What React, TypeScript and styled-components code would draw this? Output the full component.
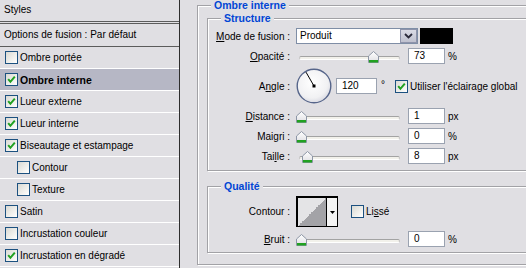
import React from 'react';
import styled, { createGlobalStyle } from 'styled-components';

const GlobalStyle = createGlobalStyle`
  html, body {
    margin: 0;
    padding: 0;
    overflow: hidden;
    background: #e0dfe3;
  }
  body {
    font-family: 'Liberation Sans', Arial, sans-serif;
    font-size: 10px;
    color: #000;
  }
`;

const Dialog = styled.div`
  display: flex;
  width: 526px;
  height: 268px;
  overflow: hidden;
  background: #e0dfe3;
`;

/* ---------- left list ---------- */

const StylesPanel = styled.div`
  width: 179px;
  flex: none;
  border-right: 1px solid #2e2e2e;
  display: flex;
  flex-direction: column;
`;

const PanelTitle = styled.div`
  height: 21px;
  line-height: 19px;
  padding-left: 4px;
`;

const DoubleRule = styled.div`
  height: 1px;
  border-top: 1px solid #5c5c5c;
  border-bottom: 1px solid #5c5c5c;
`;

const BlendRow = styled.div`
  height: 22px;
  line-height: 21px;
  padding-left: 4px;
  border-bottom: 1px solid #5c5c5c;
`;

const EffectRow = styled.div<{ $selected?: boolean; $indent?: boolean }>`
  height: 21px;
  display: flex;
  align-items: center;
  gap: 2px;
  padding-left: ${p => (p.$indent ? 17 : 5)}px;
  border-bottom: 1px solid #fff;
  background: ${p => (p.$selected ? '#b6b7c5' : 'transparent')};
  font-weight: ${p => (p.$selected ? 'bold' : 'normal')};
  font-size: ${p => (p.$selected ? '10.5px' : '10px')};
  white-space: nowrap;
`;

const Box = styled.span`
  width: 11px;
  height: 11px;
  flex: none;
  display: inline-flex;
  align-items: center;
  justify-content: center;
  border: 1px solid #1c5180;
  background: linear-gradient(135deg, #d9d9d3 0%, #f2f2ef 65%, #fff 100%);
`;

const CheckBox = ({ checked }: { checked?: boolean }) => (
  <Box>
    {checked && (
      <svg width="9" height="9" viewBox="0 0 9 9">
        <path d="M1.2 4.2 L3.4 6.8 L7.8 1.6" stroke="#21a121" strokeWidth="2" fill="none" />
      </svg>
    )}
  </Box>
);

const effects = [
  { label: 'Ombre portée' },
  { label: 'Ombre interne', checked: true, selected: true },
  { label: 'Lueur externe', checked: true },
  { label: 'Lueur interne', checked: true },
  { label: 'Biseautage et estampage', checked: true },
  { label: 'Contour', indent: true },
  { label: 'Texture', indent: true },
  { label: 'Satin' },
  { label: 'Incrustation couleur' },
  { label: 'Incrustation en dégradé', checked: true },
];

/* ---------- right settings ---------- */

const Settings = styled.div`
  flex: 1;
  min-width: 0;
  padding: 5px 0 0 17px;
`;

const Group = styled.div<{ $gapTop?: number; $pad: string }>`
  position: relative;
  width: 380px;
  margin-top: ${p => p.$gapTop ?? 0}px;
  padding: ${p => p.$pad};
  border: 1px solid #a2a2a6;
  box-shadow: inset 1px 1px 0 #fff, 1px 1px 0 #fff;
`;

const GroupTitle = styled.span`
  position: absolute;
  top: -6px;
  left: 13px;
  padding: 0 3px;
  background: #e0dfe3;
  color: #0046d5;
  font-weight: bold;
  font-size: 10.5px;
  line-height: 11px;
`;

const Fields = styled.div`
  display: grid;
  grid-template-columns: 82px auto;
  column-gap: 6px;
  row-gap: 4px;
  align-items: center;
`;

const Label = styled.div`
  text-align: right;
  white-space: nowrap;
`;

const Controls = styled.div`
  display: flex;
  align-items: center;
  white-space: nowrap;
`;

const Key = styled.span`
  text-decoration: underline;
`;

const Select = styled.div`
  display: flex;
  width: 122px;
  height: 16px;
  box-sizing: border-box;
  border: 1px solid #7f8ea6;
  background: #fff;
`;

const SelectValue = styled.span`
  flex: 1;
  padding-left: 3px;
  line-height: 14px;
`;

const SelectButton = styled.span`
  width: 15px;
  height: 12px;
  margin: 0 0 0 auto;
  display: flex;
  align-items: center;
  justify-content: center;
  border: 1px solid #8e93aa;
  background: linear-gradient(#dadbe5, #bfc1cf);
`;

const Swatch = styled.div`
  width: 33px;
  height: 16px;
  margin-left: 2px;
  background: #000;
`;

const Field = styled.div<{ $w: number; $gap?: number }>`
  width: ${p => p.$w}px;
  height: 16px;
  box-sizing: border-box;
  margin-left: ${p => p.$gap ?? 2}px;
  padding-left: 5px;
  line-height: 14px;
  border: 1px solid #9aa2b0;
  background: #fff;
`;

const Unit = styled.span<{ $gap?: number }>`
  margin-left: ${p => p.$gap ?? 3}px;
`;

const SliderBody = styled.div`
  position: relative;
  width: 110px;
  height: 16px;
  flex: none;
`;

const Track = styled.div`
  position: absolute;
  left: 3px;
  right: 6px;
  top: 8px;
  height: 2px;
  border: 1px solid;
  border-color: #a3a3a3 #c6c6c6 #fff #c6c6c6;
  border-radius: 2px;
  background: #f2f1eb;
`;

const Thumb = styled.svg`
  position: absolute;
  top: 3px;
`;

const Slider = ({ at }: { at: number }) => (
  <SliderBody>
    <Track />
    <Thumb width="11" height="12" viewBox="0 0 11 12" style={{ left: Math.round(at * 99) }}>
      <defs>
        <linearGradient id="thumbFill" x1="0" y1="0" x2="0" y2="1">
          <stop offset="0" stopColor="#fff" />
          <stop offset="1" stopColor="#dedee2" />
        </linearGradient>
      </defs>
      <path d="M5.5 0.5 L10.5 5 L10.5 11.5 L0.5 11.5 L0.5 5 Z" fill="url(#thumbFill)" stroke="#8d96a6" />
      <rect x="1" y="9" width="9" height="2.5" fill="#21a121" />
    </Thumb>
  </SliderBody>
);

const DialSvg = styled.svg`
  flex: none;
`;

const Dial = ({ angle }: { angle: number }) => {
  const r = (angle * Math.PI) / 180;
  return (
    <DialSvg width="36" height="36" viewBox="0 0 36 36">
      <defs>
        <radialGradient id="dialFill" cx="45%" cy="40%" r="65%">
          <stop offset="0" stopColor="#fff" />
          <stop offset="0.7" stopColor="#f1f1f3" />
          <stop offset="1" stopColor="#d3d4de" />
        </radialGradient>
      </defs>
      <circle cx="18" cy="18" r="16.8" fill="url(#dialFill)" stroke="#56658a" strokeWidth="1.4" />
      <line x1="18" y1="18" x2={18 + 16 * Math.cos(r)} y2={18 - 16 * Math.sin(r)} stroke="#000" strokeWidth="1" />
      <rect x="16.5" y="16.5" width="3" height="3" fill="#000" />
    </DialSvg>
  );
};

const Degree = styled.span`
  margin-left: 4px;
  margin-top: -4px;
`;

const CheckLabel = styled.span`
  margin-left: 2px;
`;

const Spaced = styled.span<{ $gap: number }>`
  display: inline-flex;
  margin-left: ${p => p.$gap}px;
`;

const ContourPicker = styled.div`
  display: flex;
  width: 42px;
  height: 31px;
  box-sizing: border-box;
  border: 1px solid #000;
  border-width: 2px 1px 1px 2px;
`;

const ContourPreview = styled.div`
  width: 28px;
  border-right: 1px solid #000;
  background: linear-gradient(to top left, #a3a3a7 50%, #e4e4e6 50%);
`;

const ContourArrow = styled.div`
  flex: 1;
  display: flex;
  align-items: center;
  justify-content: center;
  background: #f4f4f4;
`;

export default function App() {
  return (
    <Dialog>
      <GlobalStyle />
      <StylesPanel>
        <PanelTitle>Styles</PanelTitle>
        <DoubleRule />
        <BlendRow>Options de fusion : Par défaut</BlendRow>
        {effects.map(e => (
          <EffectRow key={e.label} $selected={e.selected} $indent={e.indent}>
            <CheckBox checked={e.checked} />
            {e.label}
          </EffectRow>
        ))}
      </StylesPanel>

      <Settings>
        <Group $pad="12px 0 11px 9px">
          <GroupTitle>Ombre interne</GroupTitle>

          <Group $pad="9px 0 6px 0">
            <GroupTitle>Structure</GroupTitle>
            <Fields>
              <Label>
                <Key>M</Key>ode de fusion :
              </Label>
              <Controls>
                <Select>
                  <SelectValue>Produit</SelectValue>
                  <SelectButton>
                    <svg width="9" height="6" viewBox="0 0 9 6">
                      <path d="M1 1 L4.5 4.5 L8 1" stroke="#2a2a3a" strokeWidth="1.8" fill="none" />
                    </svg>
                  </SelectButton>
                </Select>
                <Swatch />
              </Controls>

              <Label>
                <Key>O</Key>pacité :
              </Label>
              <Controls>
                <Slider at={0.73} />
                <Field $w={37}>73</Field>
                <Unit>%</Unit>
              </Controls>

              <Label>
                A<Key>n</Key>gle :
              </Label>
              <Controls>
                <Dial angle={120} />
                <Field $w={41} $gap={4}>120</Field>
                <Degree>°</Degree>
                <Spaced $gap={10}>
                  <CheckBox checked />
                </Spaced>
                <CheckLabel>Utiliser l'éclairage global</CheckLabel>
              </Controls>

              <Label>
                <Key>D</Key>istance :
              </Label>
              <Controls>
                <Slider at={0} />
                <Field $w={37}>1</Field>
                <Unit>px</Unit>
              </Controls>

              <Label>Maigri :</Label>
              <Controls>
                <Slider at={0} />
                <Field $w={37}>0</Field>
                <Unit>%</Unit>
              </Controls>

              <Label>
                Tai<Key>l</Key>le :
              </Label>
              <Controls>
                <Slider at={0.065} />
                <Field $w={37}>8</Field>
                <Unit>px</Unit>
              </Controls>
            </Fields>
          </Group>

          <Group $gapTop={15} $pad="9px 0 5px 0">
            <GroupTitle>Qualité</GroupTitle>
            <Fields>
              <Label>Contour :</Label>
              <Controls>
                <ContourPicker>
                  <ContourPreview />
                  <ContourArrow>
                    <svg width="5" height="3" viewBox="0 0 5 3">
                      <path d="M0 0 H5 L2.5 3 Z" fill="#000" />
                    </svg>
                  </ContourArrow>
                </ContourPicker>
                <Spaced $gap={13}>
                  <CheckBox />
                </Spaced>
                <CheckLabel>
                  Li<Key>s</Key>sé
                </CheckLabel>
              </Controls>

              <Label>
                <Key>B</Key>ruit :
              </Label>
              <Controls>
                <Slider at={0} />
                <Field $w={37}>0</Field>
                <Unit>%</Unit>
              </Controls>
            </Fields>
          </Group>
        </Group>
      </Settings>
    </Dialog>
  );
}
